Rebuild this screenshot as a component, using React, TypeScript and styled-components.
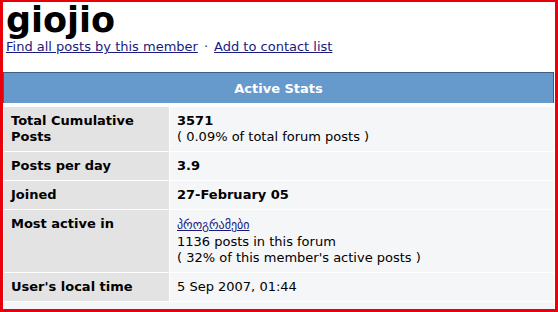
import React from "react"
import styled, { createGlobalStyle } from "styled-components"

const GlobalStyle = createGlobalStyle`
  html, body {
    margin: 0;
    padding: 0;
    background: #ffffff;
  }
  body {
    font-family: "DejaVu Sans", Verdana, sans-serif;
    font-size: 13px;
    color: #000000;
  }
`

const Frame = styled.div`
  box-sizing: border-box;
  width: 558px;
  height: 312px;
  border: 3px solid #e8000b;
  border-top-width: 2px;
  background: #ffffff;
  display: flex;
  flex-direction: column;
  overflow: hidden;
`

const Title = styled.h1`
  margin: 0;
  padding: 0 0 0 3px;
  font-size: 35px;
  line-height: 36px;
  font-weight: bold;
  color: #000000;
`

const Links = styled.div`
  padding: 0 0 0 3px;
  line-height: 17px;
  height: 34px;
`

const Link = styled.a`
  color: #1a1a80;
  text-decoration: underline;
`

const Dot = styled.span`
  margin: 0 6px;
  color: #333333;
`

const Stats = styled.div`
  display: grid;
  grid-template-columns: 166px 1fr;
  gap: 1px;
  margin-right: 1px;
  background: #ffffff;
`

const Header = styled.div`
  grid-column: 1 / -1;
  height: 30px;
  margin-bottom: 3px;
  border: 1px solid #3d5d84;
  border-bottom: none;
  background: #6699cc;
  color: #ffffff;
  font-weight: bold;
  display: flex;
  align-items: center;
  justify-content: center;
`

const Label = styled.div`
  background: #e3e3e3;
  padding: 6px 8px 6px 7px;
  line-height: 16px;
  font-weight: bold;
  margin-left: 1px;
`

const Value = styled.div<{ $bold?: boolean }>`
  background: #f5f6f8;
  padding: 6px 7px;
  line-height: 16px;
  font-weight: ${(p) => (p.$bold ? "bold" : "normal")};
`

const ForumLink = styled.a`
  display: inline-block;
  line-height: 18px;
  color: #1a1a80;
  font-size: 12px;
  text-decoration: underline;
`

const Footer = styled.div`
  flex: 1;
  margin: 1px 1px 0 1px;
  background: #f5f6f8;
`

type StatRow = {
  label: string
  value: React.ReactNode
  bold?: boolean
}

const rows: StatRow[] = [
  {
    label: "Total Cumulative Posts",
    value: (
      <>
        <b>3571</b>
        <br />( 0.09% of total forum posts )
      </>
    ),
  },
  { label: "Posts per day", value: "3.9", bold: true },
  { label: "Joined", value: "27-February 05", bold: true },
  {
    label: "Most active in",
    value: (
      <>
        <ForumLink href="#">პროგრამები</ForumLink>
        <br />
        1136 posts in this forum
        <br />( 32% of this member's active posts )
      </>
    ),
  },
  { label: "User's local time", value: "5 Sep 2007, 01:44" },
]

export default function App() {
  return (
    <>
      <GlobalStyle />
      <Frame>
        <Title>giojio</Title>
        <Links>
          <Link href="#">Find all posts by this member</Link>
          <Dot>·</Dot>
          <Link href="#">Add to contact list</Link>
        </Links>
        <Stats>
          <Header>Active Stats</Header>
          {rows.map((row) => (
            <React.Fragment key={row.label}>
              <Label>{row.label}</Label>
              <Value $bold={row.bold}>{row.value}</Value>
            </React.Fragment>
          ))}
        </Stats>
        <Footer />
      </Frame>
    </>
  )
}
